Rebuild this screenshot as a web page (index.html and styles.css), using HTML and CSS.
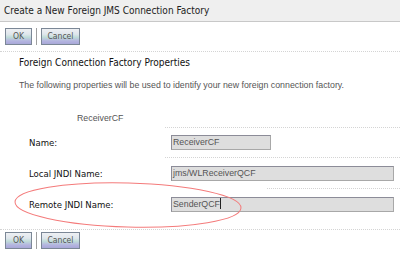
FILE: index.html
```html
<!DOCTYPE html>
<html lang="en">
<head>
  <meta charset="UTF-8">
  <title>Create a New Foreign JMS Connection Factory</title>
  <link rel="stylesheet" href="styles.css">
</head>
<body>
<div class="page">
  <div class="title">Create a New Foreign JMS Connection Factory</div>

  <div class="bar">
    <span class="btn btn-ok">OK</span>
    <span class="sep"></span>
    <span class="btn btn-cancel">Cancel</span>
  </div>

  <div class="section">
    <h2 class="heading">Foreign Connection Factory Properties</h2>
    <p class="intro">The following properties will be used to identify your new foreign connection factory.</p>
    <p class="current">ReceiverCF</p>

    <div class="form">
      <div class="rule rule-first"></div>
      <div class="row row-first">
        <label class="label">Name:</label>
        <div class="field field-short">ReceiverCF</div>
      </div>
      <div class="rule"></div>
      <div class="row">
        <label class="label">Local JNDI Name:</label>
        <div class="field">jms/WLReceiverQCF</div>
      </div>
      <div class="rule rule-mid"></div>
      <div class="row">
        <label class="label">Remote JNDI Name:</label>
        <div class="field">SenderQCF<span class="caret"></span></div>
      </div>
    </div>
  </div>

  <div class="bar bar-bottom">
    <span class="btn btn-ok">OK</span>
    <span class="sep"></span>
    <span class="btn btn-cancel">Cancel</span>
  </div>

  <svg class="mark" width="400" height="254" viewBox="0 0 400 254">
    <ellipse cx="128" cy="205" rx="113" ry="22" fill="none" stroke="#f47b7b" stroke-width="1" transform="rotate(1.5 128 205)"/>
  </svg>
</div>
</body>
</html>
```

FILE: styles.css
```css
body, h2, p {
  margin: 0;
  padding: 0;
}

body {
  background: #fff;
  font-family: "DejaVu Sans Condensed", "DejaVu Sans", Tahoma, sans-serif;
  font-size: 10px;
  color: #222;
}

.page {
  width: 400px;
  height: 254px;
  position: relative;
  overflow: hidden;
}

.title {
  height: 21px;
  line-height: 22px;
  padding-left: 4px;
  background: #efefef;
  border-bottom: 1px solid #c8c8c8;
  font-size: 10px;
  color: #222;
}

.bar {
  display: flex;
  align-items: center;
  padding: 6px 0 6px 5px;
  border-bottom: 1px dotted #d4d4d4;
}

.bar-bottom {
  border-bottom: none;
  border-top: 1px dotted #d4d4d4;
  padding-top: 2px;
  margin-top: 10px;
}

.btn {
  box-sizing: border-box;
  height: 17px;
  line-height: 15px;
  text-align: center;
  font-size: 8.5px;
  color: #555;
  border: 1px solid #7b8796;
  background: linear-gradient(#eef0f3 0%, #dfe6ec 35%, #bfdcd8 55%, #b4b4e0 80%, #a8a8d8 100%);
}

.btn-ok {
  width: 27px;
}

.btn-cancel {
  width: 39px;
}

.sep {
  width: 1px;
  height: 17px;
  margin: 0 4px 0 4px;
  background: #a0a0a0;
}

.section {
  padding: 4px 0 0 19px;
}

.heading {
  font-size: 10px;
  font-weight: normal;
  color: #111;
  line-height: 13px;
}

.intro {
  margin-top: 10px;
  font-family: "Liberation Sans", Arial, sans-serif;
  font-size: 8.8px;
  color: #555;
  line-height: 13px;
  white-space: nowrap;
}

.current {
  margin: 20px 0 0 58px;
  font-family: "Liberation Sans", Arial, sans-serif;
  font-size: 8.8px;
  color: #555;
  line-height: 13px;
}

.form {
  margin-left: -19px;
}

.rule {
  margin-left: 165px;
  border-top: 1px dotted #d4d4d4;
  height: 0;
}

.rule-first {
  margin-top: 2px;
}

.rule-mid {
  margin-left: 267px;
}

.row {
  display: grid;
  grid-template-columns: 171px 1fr;
  align-items: center;
  height: 30px;
}

.row-first {
  height: 29px;
}

.label {
  padding-left: 29px;
  font-size: 9.5px;
  color: #111;
}

.field {
  box-sizing: border-box;
  width: 223px;
  height: 15px;
  line-height: 13px;
  padding-left: 1px;
  background: #dedede;
  border: 1px solid #8c8c98;
  border-bottom-color: #a8a8a8;
  border-right-color: #a8a8a8;
  font-family: "Liberation Sans", Arial, sans-serif;
  font-size: 8.8px;
  color: #555;
  white-space: nowrap;
}

.field-short {
  width: 100px;
}

.caret {
  display: inline-block;
  width: 1px;
  height: 11px;
  background: #222;
  vertical-align: -2px;
}

.mark {
  position: absolute;
  left: 0;
  top: 0;
  pointer-events: none;
}
```
